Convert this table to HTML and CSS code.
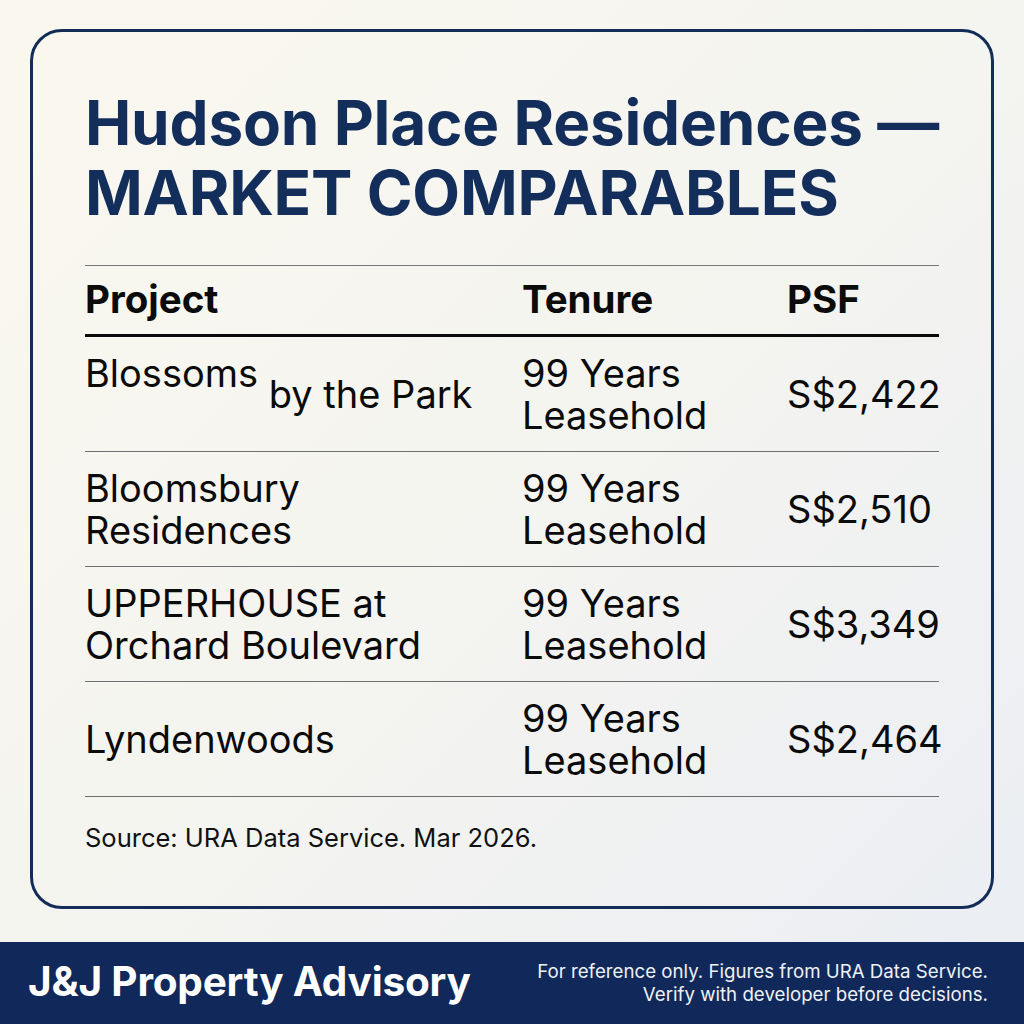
FILE: index.html
```html
<!DOCTYPE html>
<html>
<head>
<meta charset="utf-8">
<link rel="stylesheet" href="styles.css">
</head>
<body>
<div class="page">
  <main class="stage">
    <section class="card">
      <h1 class="title">Hudson Place Residences —<br>MARKET COMPARABLES</h1>
      <div class="table">
        <div class="row head">
          <div class="c1">Project</div>
          <div class="c2">Tenure</div>
          <div class="c3">PSF</div>
        </div>
        <div class="row">
          <div class="c1 tall">Blossoms <span class="drop">by the Park</span></div>
          <div class="c2">99 Years<br>Leasehold</div>
          <div class="c3">S$2,422</div>
        </div>
        <div class="row">
          <div class="c1">Bloomsbury<br>Residences</div>
          <div class="c2">99 Years<br>Leasehold</div>
          <div class="c3">S$2,510</div>
        </div>
        <div class="row">
          <div class="c1">UPPERHOUSE at<br>Orchard Boulevard</div>
          <div class="c2">99 Years<br>Leasehold</div>
          <div class="c3">S$3,349</div>
        </div>
        <div class="row">
          <div class="c1">Lyndenwoods</div>
          <div class="c2">99 Years<br>Leasehold</div>
          <div class="c3">S$2,464</div>
        </div>
      </div>
      <p class="source">Source: URA Data Service. Mar 2026.</p>
    </section>
  </main>
  <footer class="footer">
    <div class="brand">J&amp;J Property Advisory</div>
    <div class="note">For reference only. Figures from URA Data Service.<br>Verify with developer before decisions.</div>
  </footer>
</div>
</body>
</html>
```
FILE: styles.css
```css
* { box-sizing: border-box; margin: 0; padding: 0; }
html, body { width: 1024px; height: 1024px; }
body {
  font-family: Inter, "Noto Sans", sans-serif;
  color: #111;
  background: linear-gradient(135deg, #faf8ee 0%, #f4f4f0 50%, #eaedf3 100%);
}
.page { display: flex; flex-direction: column; height: 1024px; }
.stage { flex: 1; padding: 29px 30px 33px 30px; }
.card {
  height: 880px;
  border: 3px solid #132d58;
  border-radius: 32px;
  padding: 56px 52px 0 52px;
}
.title {
  font-size: 62px;
  line-height: 70px;
  font-weight: 700;
  color: #142e5c;
  letter-spacing: -0.2px;
}
.table {
  margin-top: 37px;
  border-top: 1px solid #777;
}
.row {
  display: grid;
  grid-template-columns: 437px 265px 154px;
  align-items: center;
  height: 115px;
  border-bottom: 1px solid #6f6f6f;
  font-size: 38px;
  line-height: 42px;
  color: #0b0b0b;
}
.row.head {
  height: 71px;
  border-bottom: 3px solid #0a0a0a;
  font-weight: 700;
  font-size: 38.5px;
  padding-bottom: 2px;
}
.tall { height: 84px; }
.drop { display: inline-block; transform: translateY(21px); }
.source {
  margin-top: 26px;
  font-size: 25.5px;
  line-height: 30px;
  color: #111;
}
.footer {
  height: 82px;
  background: #10295a;
  display: flex;
  align-items: center;
  justify-content: space-between;
  padding: 0 36px 4px 28px;
  color: #fff;
}
.brand { font-size: 40.5px; font-weight: 700; letter-spacing: -0.2px; }
.note { font-size: 18.7px; line-height: 23px; text-align: right; color: #eef1f6; padding-top: 4px; }
```
